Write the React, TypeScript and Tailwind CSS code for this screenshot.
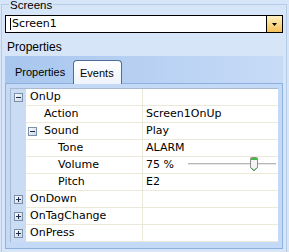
import React from "react";

type Row = {
  level: number;
  name: string;
  exp?: "minus" | "plus";
  value?: string;
  slider?: boolean;
};

const rows: Row[] = [
  { level: 0, name: "OnUp", exp: "minus" },
  { level: 1, name: "Action", value: "Screen1OnUp" },
  { level: 1, name: "Sound", exp: "minus", value: "Play" },
  { level: 2, name: "Tone", value: "ALARM" },
  { level: 2, name: "Volume", value: "75 %", slider: true },
  { level: 2, name: "Pitch", value: "E2" },
  { level: 0, name: "OnDown", exp: "plus" },
  { level: 0, name: "OnTagChange", exp: "plus" },
  { level: 0, name: "OnPress", exp: "plus" },
];

function Expander({ kind }: { kind: "minus" | "plus" }) {
  return (
    <svg width="9" height="9" viewBox="0 0 9 9" className="block shrink-0">
      <defs>
        <linearGradient id="expg" x1="0" y1="0" x2="1" y2="1">
          <stop offset="0" stopColor="#ffffff" />
          <stop offset="1" stopColor="#c8d4e4" />
        </linearGradient>
      </defs>
      <rect x="0.5" y="0.5" width="8" height="8" fill="url(#expg)" stroke="#7b8fa9" />
      <rect x="2" y="4" width="5" height="1" fill="#1e2f4a" />
      {kind === "plus" && <rect x="4" y="2" width="1" height="5" fill="#1e2f4a" />}
    </svg>
  );
}

function Slider() {
  return (
    <div className="relative ml-[14px] h-[16px] w-[88px]">
      <div className="absolute left-0 right-0 top-[6px] h-[2px] bg-[#b7b7b7] border-b border-[#e6e6e6]" />
      <svg width="8" height="15" viewBox="0 0 8 15" className="absolute left-[62px] top-[0px]">
        <path d="M0.5 1.5 Q0.5 0.5 1.5 0.5 H6.5 Q7.5 0.5 7.5 1.5 V10.5 L4 14 L0.5 10.5 Z" fill="#f4f4f4" stroke="#8e8e8e" />
        <rect x="1" y="1" width="6" height="2" fill="#3fbf3f" />
        <path d="M1 10.5 L4 13.5 L7 10.5" fill="none" stroke="#3aa63a" />
      </svg>
    </div>
  );
}

export default function App() {
  return (
    <div className="w-[289px] h-[252px] overflow-hidden bg-[#d6e5f7] font-['Liberation_Sans',sans-serif] text-black">
      <fieldset className="ml-[1px] mr-[2px] h-[270px] border border-[#b5cbe6] px-[3px]">
        <legend className="ml-[4px] h-[8px] px-[1px] text-[11.5px] leading-[11px]">Screens</legend>
        {/* combo box */}
        <div className="mt-[7px] flex h-[18px] border border-black bg-white">
          <div className="flex flex-1 items-center pl-[4px] font-['DejaVu_Sans',sans-serif] text-[11px]">
            <span className="mr-[1px] h-[12px] w-[1px] bg-black" />
            Screen1
          </div>
          <div className="flex w-[16px] items-center justify-center border-l border-black bg-gradient-to-b from-[#fff1c4] via-[#fbd98a] to-[#f6c15a]">
            <svg width="5" height="3" viewBox="0 0 5 3">
              <path d="M0 0 H5 L2.5 3 Z" fill="#000" />
            </svg>
          </div>
        </div>
        <div className="mt-[7px] pl-[2px] text-[12px] leading-[14px]">Properties</div>
        {/* tabs */}
        <div className="mt-[2px] flex h-[27px] items-end bg-gradient-to-r from-[#a8c6ee] to-[#c7dbf7] pl-[5px]">
          <div className="flex h-[23px] w-[63px] items-center pl-[5px] pt-[2px] text-[11px]">Properties</div>
          <div className="relative -mb-[1px] flex h-[24px] w-[49px] items-center rounded-t-[4px] border border-b-0 border-[#4e6d99] bg-gradient-to-b from-[#ffffff] to-[#eef4fc] pl-[6px] pt-[2px] text-[11px]">
            Events
          </div>
        </div>
        {/* panel */}
        <div className="h-[166px] border border-[#8cb0df] bg-[#c3d9f5] p-[4px]">
          <div className="border-l border-t border-[#a9b9cf] bg-white font-['DejaVu_Sans',sans-serif] text-[11px]">
            {rows.map((r, i) => (
              <div key={i} className="flex h-[17px]">
                <div className="flex w-[15px] shrink-0 items-center justify-end bg-[#c9dcf4] pr-[3px]">
                  {r.level === 0 && r.exp && <Expander kind={r.exp} />}
                </div>
                <div className="flex w-[117px] shrink-0 items-center border-b border-r border-[#ece9d8]">
                  <div
                    className={
                      r.level === 0
                        ? "pl-[4px]"
                        : r.level === 1
                        ? "pl-[18px]"
                        : "pl-[32px]"
                    }
                  >
                    {r.level === 1 && r.exp ? (
                      <div className="-ml-[16px] flex items-center">
                        <Expander kind={r.exp} />
                        <span className="ml-[7px]">{r.name}</span>
                      </div>
                    ) : (
                      r.name
                    )}
                  </div>
                </div>
                <div className="flex flex-1 items-center border-b border-[#ece9d8] pl-[3px]">
                  <span>{r.value ?? ""}</span>
                  {r.slider && <Slider />}
                </div>
              </div>
            ))}
          </div>
        </div>
      </fieldset>
    </div>
  );
}
